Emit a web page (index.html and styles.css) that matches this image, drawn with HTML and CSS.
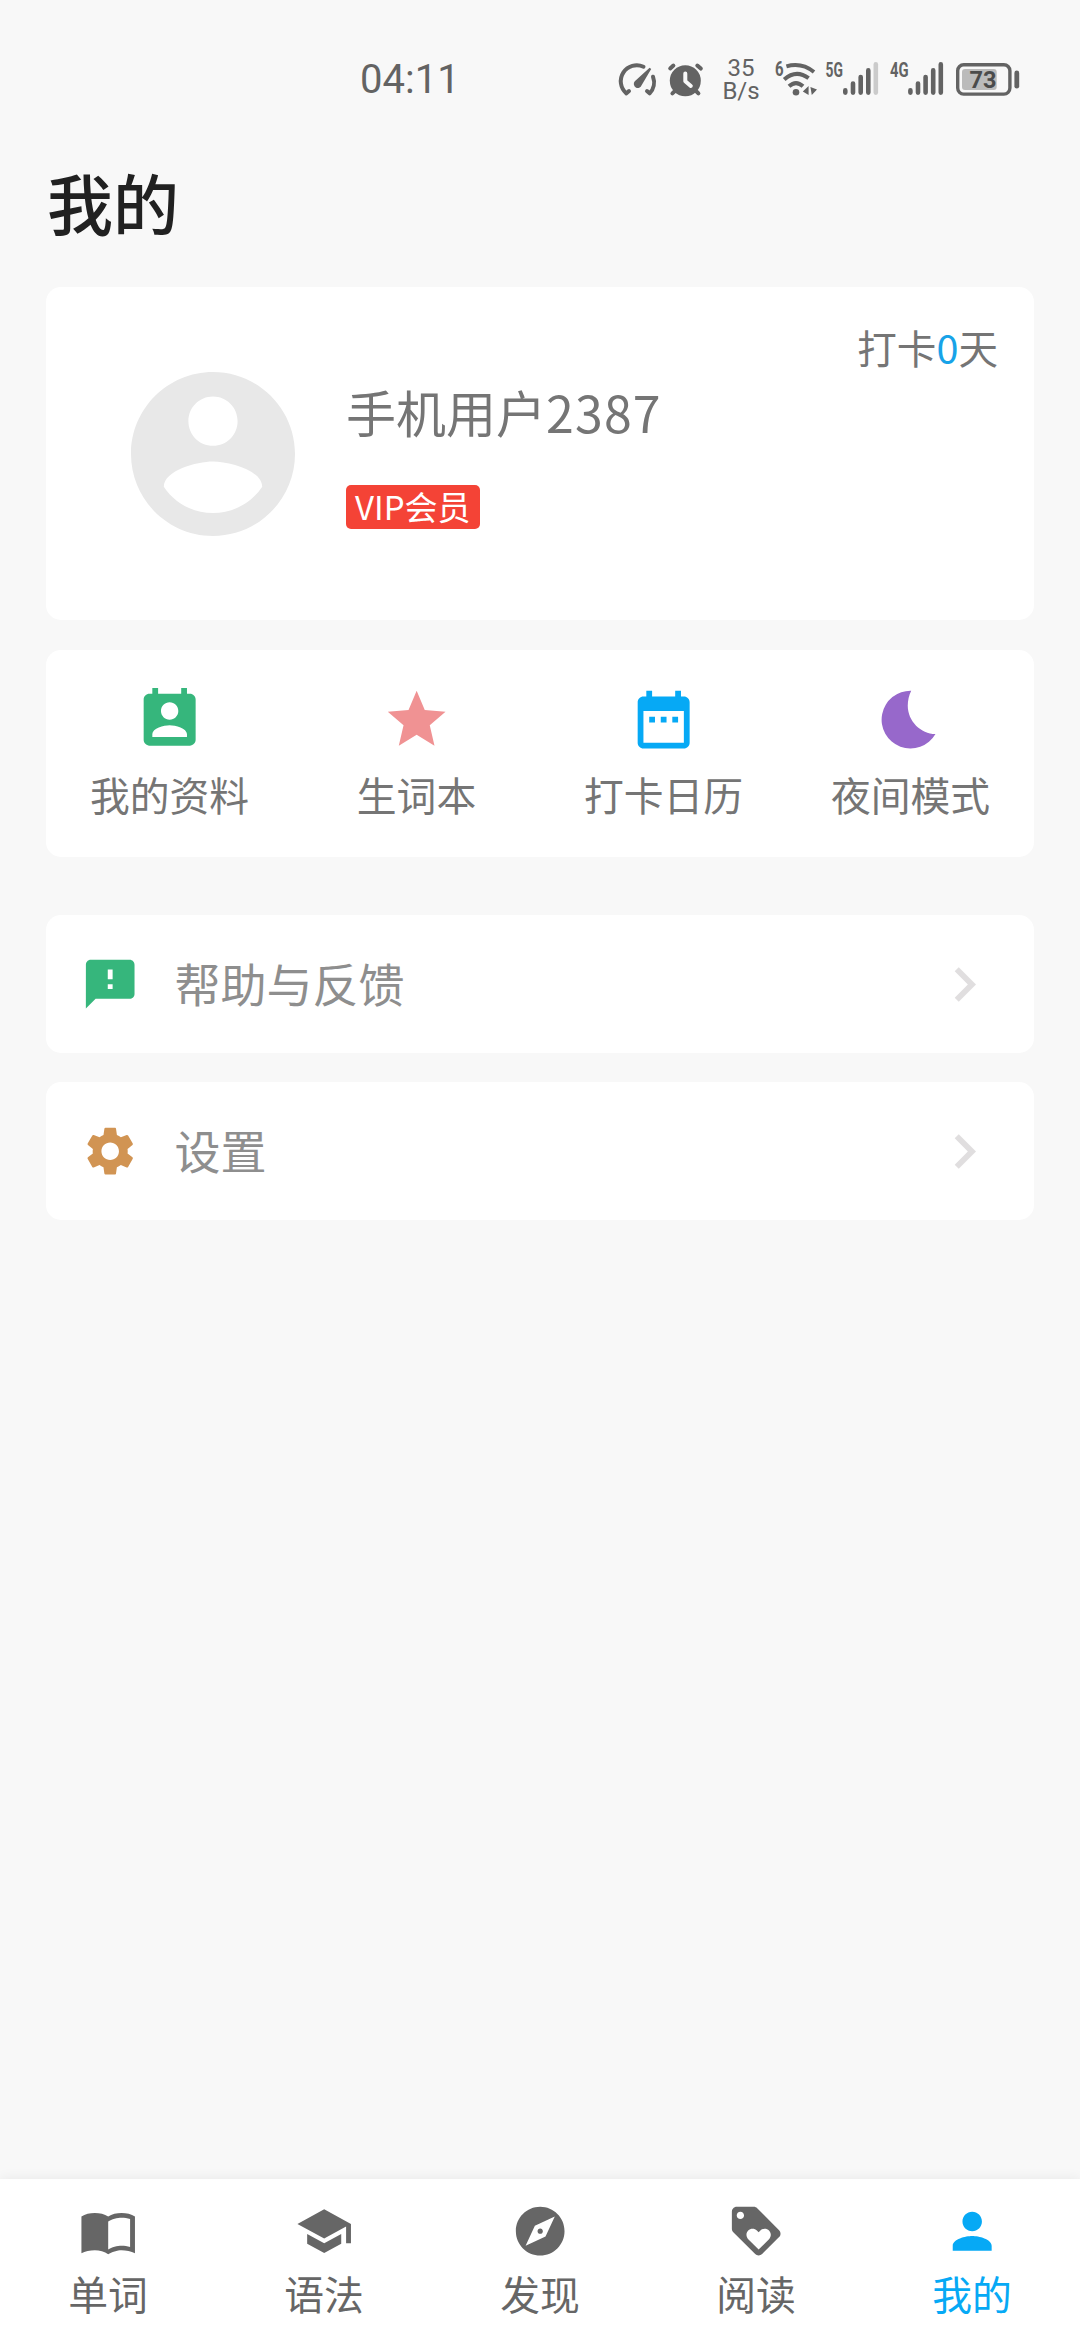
FILE: index.html
```html
<!DOCTYPE html>
<html lang="zh-CN">
<head>
<meta charset="utf-8">
<title>我的</title>
<link rel="stylesheet" href="styles.css">
</head>
<body>
<div class="screen">
  <header class="status">
    <span class="clock">04:11</span>
    <div class="indicators">
      <svg width="46" height="48" viewBox="616 56 46 48">
        <g fill="none" stroke="#636363" stroke-width="4" stroke-linecap="round" stroke-linejoin="round">
          <path d="M629 91L626.4 93.4A16 16 0 0 1 643.5 66.7"/>
          <path d="M647 91L649.6 93.4A16 16 0 0 0 653 76.7"/>
        </g>
        <path d="M649.6 67.8L634.8 81.3A4 4 0 1 0 641.6 85.2L651.2 69Z" fill="#636363"/>
      </svg>
      <svg width="48" height="48" viewBox="662 56 48 48">
        <circle cx="685.3" cy="80.7" r="15.5" fill="#636363"/>
        <g fill="none" stroke="#636363" stroke-width="4" stroke-linecap="round">
          <path d="M670.2 68.5L673.4 65.5M697.3 65.5L700.8 68.6M672.4 93.4L676 90M698.4 93.4L695 90"/>
        </g>
        <path d="M685.3 73.5V81.3L690.8 86" fill="none" stroke="#f8f8f8" stroke-width="4" stroke-linecap="round" stroke-linejoin="round"/>
      </svg>
      <div class="speed"><span>35</span><span>B/s</span></div>
      <svg width="50" height="48" viewBox="772 56 50 48">
        <text class="net" x="775" y="76.4" textLength="8.6" lengthAdjust="spacingAndGlyphs">6</text>
        <g fill="none" stroke="#636363" stroke-width="4">
          <path d="M789 86.3Q796 79.8 803 86.3"/>
          <path d="M784.2 79.6Q796 69 808.6 78.2"/>
          <path d="M786.4 66.4Q801.5 62 814 72"/>
        </g>
        <circle cx="796" cy="92.3" r="3.3" fill="#636363"/>
        <path d="M802.8 91.5L808.6 86V95ZM810.4 87L817 89.5L811.8 95Z" fill="#636363"/>
      </svg>
      <svg width="64" height="48" viewBox="822 56 64 48">
        <text class="net" x="825.5" y="76.7" textLength="17.4" lengthAdjust="spacingAndGlyphs">5G</text>
        <g stroke="#636363" stroke-width="4.6" stroke-linecap="round">
          <path d="M845.3 90.4V92.6M853 83.5V92.6M860.7 77V92.6M868.3 70.4V92.6"/>
          <path d="M875.8 64.4V92.6" stroke="#cbcbcb"/>
        </g>
      </svg>
      <svg width="64" height="48" viewBox="886 56 64 48">
        <text class="net" x="890" y="76.7" textLength="18.6" lengthAdjust="spacingAndGlyphs">4G</text>
        <path d="M910.4 90.4V92.6M918 83.5V92.6M925.6 77V92.6M933.2 70.4V92.6M940.8 64.4V92.6" stroke="#636363" stroke-width="4.6" stroke-linecap="round"/>
      </svg>
      <svg width="74" height="48" viewBox="950 56 74 48">
        <rect x="957.7" y="64.7" width="52.2" height="29.4" rx="6" fill="none" stroke="#636363" stroke-width="3.4"/>
        <rect x="962" y="69" width="34.7" height="21" rx="3" fill="#bbb"/>
        <rect x="1014.4" y="70.6" width="4.8" height="18" rx="2.4" fill="#636363"/>
        <text class="charge" x="969.4" y="88" textLength="27" lengthAdjust="spacingAndGlyphs">73</text>
      </svg>
    </div>
  </header>

  <h1 class="title">我的</h1>

  <main class="content">
    <section class="card profile">
      <svg class="avatar" viewBox="2 2 20 20" fill="#e8e8e8"><path d="M12 2C6.48 2 2 6.48 2 12s4.48 10 10 10 10-4.48 10-10S17.52 2 12 2zm0 3c1.66 0 3 1.34 3 3s-1.34 3-3 3-3-1.34-3-3 1.34-3 3-3zm0 14.2c-2.5 0-4.71-1.28-6-3.22.03-1.99 4-3.08 6-3.08 1.99 0 5.97 1.09 6 3.08-1.29 1.94-3.5 3.22-6 3.22z"/></svg>
      <div class="identity">
        <div class="name">手机用户<span class="digits">2387</span></div>
        <span class="vip">VIP会员</span>
      </div>
      <div class="streak">打卡<span class="count">0</span>天</div>
    </section>

    <section class="card shortcuts">
      <div class="shortcut">
        <svg viewBox="0 0 24 24" fill="#36b67c"><path d="M19 3h-1V1h-2v2H8V1H6v2H5c-1.11 0-2 .9-2 2v14c0 1.1.89 2 2 2h14c1.1 0 2-.9 2-2V5c0-1.1-.9-2-2-2zm-7 3c1.66 0 3 1.34 3 3s-1.34 3-3 3-3-1.34-3-3 1.34-3 3-3zm6 12H6v-1c0-2 4-3.1 6-3.1s6 1.1 6 3.1v1z"/></svg>
        <span>我的资料</span>
      </div>
      <div class="shortcut">
        <svg viewBox="0 0 24 24" fill="#f09293"><path d="M12 17.27L18.18 21l-1.64-7.03L22 9.24l-7.19-.61L12 2 9.19 8.63 2 9.24l5.46 4.73L5.82 21z"/></svg>
        <span>生词本</span>
      </div>
      <div class="shortcut">
        <svg viewBox="0 0 24 24" fill="#06a9f5"><path d="M9 11H7v2h2v-2zm4 0h-2v2h2v-2zm4 0h-2v2h2v-2zm2-7h-1V2h-2v2H8V2H6v2H5c-1.11 0-1.99.9-1.99 2L3 20c0 1.1.89 2 2 2h14c1.1 0 2-.9 2-2V6c0-1.1-.9-2-2-2zm0 16H5V9h14v11z"/></svg>
        <span>打卡日历</span>
      </div>
      <div class="shortcut">
        <svg viewBox="0 0 24 24" fill="#9768cb"><path d="M12.2 2C11.4 3.6 11 5.4 11 7.2C11 12.5 15.5 17 20.6 17A10 10 0 1 1 12.2 2z"/></svg>
        <span>夜间模式</span>
      </div>
    </section>

    <section class="menu">
      <div class="card row">
        <svg class="lead" viewBox="0 0 24 24" fill="#36b67c"><path d="M20 2H4c-1.1 0-1.99.9-1.99 2L2 22l4-4h14c1.1 0 2-.9 2-2V4c0-1.1-.9-2-2-2zm-7 12h-2v-2h2v2zm0-4h-2V6h2v4z"/></svg>
        <span class="label">帮助与反馈</span>
        <svg class="chevron" viewBox="0 0 24 24" fill="#e0dedf"><path d="M10 6L8.59 7.41 13.17 12l-4.58 4.59L10 18l6-6z"/></svg>
      </div>
      <div class="card row">
        <svg class="lead" viewBox="0 0 24 24" fill="#d19453"><path d="M19.14 12.94c.04-.3.06-.61.06-.94 0-.32-.02-.64-.07-.94l2.03-1.58c.18-.14.23-.41.12-.61l-1.92-3.32c-.12-.22-.37-.29-.59-.22l-2.39.96c-.5-.38-1.03-.7-1.62-.94l-.36-2.54c-.04-.24-.24-.41-.48-.41h-3.84c-.24 0-.43.17-.47.41l-.36 2.54c-.59.24-1.13.57-1.62.94l-2.39-.96c-.22-.08-.47 0-.59.22L2.74 8.87c-.12.21-.08.47.12.61l2.03 1.58c-.05.3-.09.63-.09.94s.02.64.07.94l-2.03 1.58c-.18.14-.23.41-.12.61l1.92 3.32c.12.22.37.29.59.22l2.39-.96c.5.38 1.03.7 1.62.94l.36 2.54c.05.24.24.41.48.41h3.84c.24 0 .44-.17.47-.41l.36-2.54c.59-.24 1.13-.56 1.62-.94l2.39.96c.22.08.47 0 .59-.22l1.92-3.32c.12-.22.07-.47-.12-.61l-2.01-1.58zM12 15.6c-1.98 0-3.6-1.62-3.6-3.6s1.62-3.6 3.6-3.6 3.6 1.62 3.6 3.6-1.62 3.6-3.6 3.6z"/></svg>
        <span class="label">设置</span>
        <svg class="chevron" viewBox="0 0 24 24" fill="#e0dedf"><path d="M10 6L8.59 7.41 13.17 12l-4.58 4.59L10 18l6-6z"/></svg>
      </div>
    </section>
  </main>

  <nav class="tabs">
    <div class="tab">
      <svg viewBox="0 0 24 24"><path d="M12 6C10.55 4.9 8.45 4.5 6.5 4.5S2.45 4.9 1 6v15.1c1.45-.9 3.55-1.3 5.5-1.3s4.05.6 5.5 1.7c1.35-.95 3.8-1.7 5.5-1.7s4.05.4 5.5 1.3V6c-1.45-1.1-3.55-1.5-5.5-1.5S13.45 4.9 12 6zm9 12.5c-1.1-.35-2.3-.5-3.5-.5-1.7 0-4.15.65-5.5 1.5V8c1.35-.85 3.8-1.5 5.5-1.5 1.2 0 2.4.15 3.5.5v11.5z"/></svg>
      <span>单词</span>
    </div>
    <div class="tab">
      <svg viewBox="0 0 24 24"><path d="M5 13.18v4L12 21l7-3.82v-4L12 17l-7-3.82zM12 3L1 9l11 6 9-4.91V17h2V9L12 3z"/></svg>
      <span>语法</span>
    </div>
    <div class="tab">
      <svg viewBox="0 0 24 24"><path d="M12 10.9c-.61 0-1.1.49-1.1 1.1s.49 1.1 1.1 1.1c.61 0 1.1-.49 1.1-1.1s-.49-1.1-1.1-1.1zM12 2C6.48 2 2 6.48 2 12s4.48 10 10 10 10-4.48 10-10S17.52 2 12 2zm2.19 12.19L6 18l3.81-8.19L18 6l-3.81 8.19z"/></svg>
      <span>发现</span>
    </div>
    <div class="tab">
      <svg viewBox="0 0 24 24"><path d="M21.41 11.58l-9-9C12.05 2.22 11.55 2 11 2H4c-1.1 0-2 .9-2 2v7c0 .55.22 1.05.59 1.42l9 9c.36.36.86.58 1.41.58s1.05-.22 1.41-.59l7-7c.37-.36.59-.86.59-1.41s-.23-1.06-.59-1.42zM5.5 7C4.67 7 4 6.33 4 5.5S4.67 4 5.5 4 7 4.67 7 5.5 6.33 7 5.5 7zm11.77 8.27L13 19.54l-4.27-4.27C8.28 14.81 8 14.19 8 13.5c0-1.38 1.12-2.5 2.5-2.5.69 0 1.32.28 1.77.74l.73.72.73-.73c.45-.45 1.08-.73 1.77-.73 1.38 0 2.5 1.12 2.5 2.5 0 .69-.28 1.32-.73 1.77z"/></svg>
      <span>阅读</span>
    </div>
    <div class="tab active">
      <svg viewBox="0 0 24 24"><path d="M12 12c2.21 0 4-1.79 4-4s-1.79-4-4-4-4 1.79-4 4 1.79 4 4 4zm0 2c-2.67 0-8 1.34-8 4v2h16v-2c0-2.66-5.33-4-8-4z"/></svg>
      <span>我的</span>
    </div>
  </nav>
</div>
</body>
</html>
```
FILE: styles.css
```css
* {
  box-sizing: border-box;
}

body {
  margin: 0;
  background: #f8f8f8;
  font-family: "Noto Sans CJK SC", sans-serif;
  color: #757575;
}

svg {
  display: block;
  flex: none;
}

.screen {
  display: flex;
  flex-direction: column;
  width: 1080px;
  height: 2340px;
  overflow: hidden;
}

.status {
  display: flex;
  justify-content: space-between;
  height: 154px;
  padding: 56px 56px 0 360px;
  color: #636363;
}

.clock {
  font-family: Roboto, sans-serif;
  font-size: 40px;
  line-height: 48px;
}

.indicators {
  display: flex;
}

.speed {
  display: flex;
  flex-direction: column;
  align-items: center;
  width: 62px;
  padding-top: 1px;
  font-family: Roboto, sans-serif;
  font-size: 24px;
  line-height: 23px;
}

.net {
  font: 700 20.5px Roboto, sans-serif;
  fill: #636363;
}

.charge {
  font: 700 24px Roboto, sans-serif;
  fill: #4b4b4b;
}

.title {
  height: 133px;
  margin: 0;
  padding-left: 47px;
  font-size: 66px;
  font-weight: 500;
  line-height: 94px;
  color: #212121;
}

.content {
  display: flex;
  flex: 1;
  flex-direction: column;
  padding: 0 46px;
}

.card {
  background: #fff;
  border-radius: 15px;
}

.profile {
  display: flex;
  height: 333px;
  margin-bottom: 30px;
  padding: 0 36px 0 85px;
}

.avatar {
  width: 164px;
  height: 164px;
  margin-top: 85px;
}

.identity {
  display: flex;
  flex: 1;
  flex-direction: column;
  align-items: flex-start;
  padding: 87px 0 0 51px;
}

.name {
  font-size: 50px;
  line-height: 74px;
}

.digits {
  letter-spacing: 1.2px;
}

.vip {
  height: 44px;
  margin-top: 37px;
  padding: 0 9px;
  border-radius: 5px;
  background: #f44336;
  color: #fff;
  font-size: 33px;
  line-height: 42px;
}

.streak {
  padding-top: 31px;
  font-size: 39.6px;
  line-height: 58px;
}

.count {
  color: #17a3e8;
}

.shortcuts {
  display: grid;
  grid-template-columns: repeat(4, 1fr);
  height: 207px;
  margin-bottom: 58px;
  padding-top: 35px;
}

.shortcut {
  display: flex;
  flex-direction: column;
  align-items: center;
  gap: 11px;
  font-size: 39.8px;
  line-height: 58px;
}

.shortcut svg {
  width: 69.3px;
  height: 69.3px;
}

.menu {
  display: flex;
  flex-direction: column;
  gap: 29px;
}

.row {
  display: flex;
  align-items: center;
  height: 138px;
  padding: 0 35px;
}

.lead {
  width: 58.4px;
  height: 58.4px;
}

.label {
  flex: 1;
  padding: 0 0 5px 35px;
  font-size: 46px;
  line-height: 66px;
  color: #8e8e8e;
}

.chevron {
  width: 69px;
  height: 69px;
}

.tabs {
  display: grid;
  grid-template-columns: repeat(5, 1fr);
  height: 161px;
  padding-top: 23px;
  background: #fff;
  box-shadow: 0 0 12px rgba(0, 0, 0, 0.07);
  color: #666;
}

.tab {
  display: flex;
  flex-direction: column;
  align-items: center;
  gap: 4px;
  font-size: 39.8px;
  line-height: 58px;
}

.tab svg {
  width: 58.4px;
  height: 58.4px;
  fill: currentColor;
}

.active {
  color: #06a9f5;
}
```
